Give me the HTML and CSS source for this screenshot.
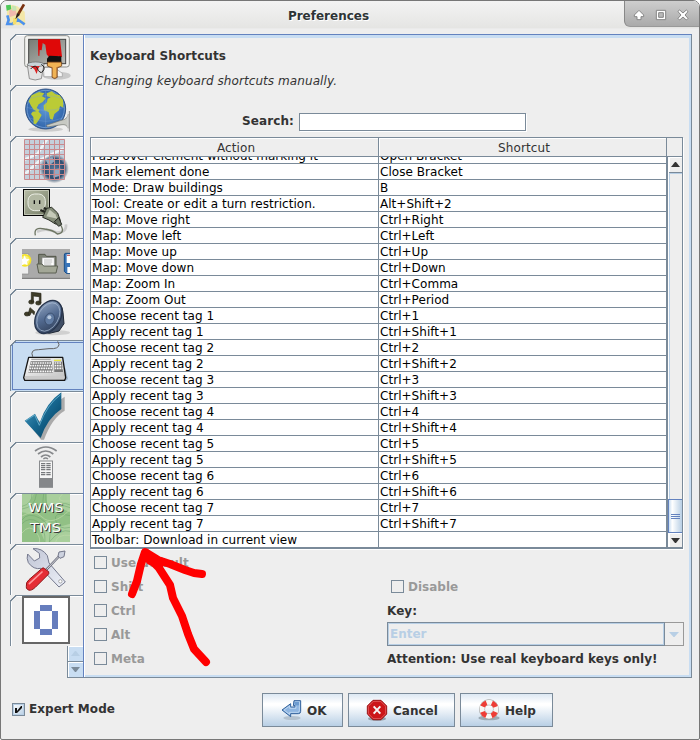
FILE: index.html
```html
<!DOCTYPE html>
<html lang="en">
<head>
<meta charset="utf-8">
<title>Preferences</title>
<link rel="stylesheet" href="styles.css">
</head>
<body>
<div class="window">
  <header class="titlebar">
    <svg class="app-icon" viewBox="15 9 66 72">
      <path fill="#f4e7a8" d="M20 18l18-3 14 4 22 16 2 38-24 3-30-4z"/>
      <path fill="#4fc95a" d="M18 16l14-2 2 14-14 4z"/>
      <path fill="#f1b9ad" d="M28 30l18-4 4 18-22 8z"/>
      <path fill="#c6e5b4" d="M36 17l12 2 2 12-13 2z"/>
      <path fill="none" stroke="#4c91ed" stroke-width="8" d="M22 46l4 14-4 12h16l14-14 12 8 10 7"/>
      <path fill="#f7df6a" d="M40 54l12 0-4 18-10 2z"/>
      <path stroke="#7a3210" stroke-width="8" d="M72 13L55 42"/>
      <path fill="#2d211b" d="M51 39l9 5-14 14z"/>
    </svg>
    <h1 class="title">Preferences</h1>
    <div class="controls">
      <svg viewBox="825 0 225 84">
        <g fill="#fff" stroke="#858585" stroke-width="3" stroke-linejoin="round">
          <path d="M870 31l14 14v5h-8v9h-12v-9h-8v-5z"/>
          <path fill-rule="evenodd" d="M922 31h28v28h-28zM929 38v14h14v-14z"/>
          <path d="M987 34l5-4 10 9 10-9 5 5-9 10 9 10-5 5-10-9-10 9-5-5 9-10-9-10z"/>
        </g>
      </svg>
    </div>
  </header>

  <main class="main">
    <nav class="tabs">
      <div class="tab"><svg viewBox="33 15 216 150">
        <defs><linearGradient id="scr" x2="1" y2="1"><stop stop-color="#777b75"/><stop offset="1" stop-color="#b9bbb6"/></linearGradient></defs>
        <ellipse cx="170" cy="137" rx="42" ry="12" fill="#c9c9c9"/>
        <path fill="#f5f5f5" stroke="#999" stroke-width="2" d="M130 112h32l25 18v10h-55z"/>
        <rect x="74" y="17" width="134" height="94" rx="8" fill="#f2f2ef" stroke="#8c8e8a" stroke-width="3"/>
        <rect x="86" y="28" width="111" height="73" fill="url(#scr)" stroke="#444" stroke-width="3"/>
        <path fill="#df0808" d="M114 28h66l6 52-7 3-4-6-5 6-6-5-5 6-6-6-6 4-7-9-4-29-8-5-3 22-6-1-1 18-3-1-1-32z"/>
        <path fill="#111" d="M141 86l7-9 36 2v17h-43z"/>
        <path fill="#b2713a" stroke="#704217" stroke-width="2" d="M142 96h43v12l-13 6v28q-8 8-16 0v-28l-14-6z"/>
        <path fill="#f0b354" d="M144 98h39v9l-14 5v29q-5 5-11 0v-29l-14-5z"/>
        <path fill="#e2e2e2" stroke="#666" stroke-width="2" d="M82 104l6 42q17 8 36 0l8-42z"/>
        <ellipse cx="107" cy="103" rx="25" ry="7" fill="#c9d4d8" stroke="#666" stroke-width="2"/>
        <path fill="#db2424" d="M91 108h28l-5 10-4 14-7-14z"/>
        <path fill="none" stroke="#222" stroke-width="3" d="M92 117q11-13 18-6 10 25 19 12 9-10-5-20"/>
      </svg></div>
      <div class="tab"><svg viewBox="33 168 216 150">
        <defs><radialGradient id="sea"><stop stop-color="#5c98d5"/><stop offset="1" stop-color="#3164aa"/></radialGradient></defs>
        <ellipse cx="137" cy="298" rx="52" ry="7" fill="#ccc"/>
        <circle cx="137" cy="237" r="60" fill="url(#sea)" stroke="#315485" stroke-width="3"/>
        <circle cx="137" cy="237" r="56" fill="none" stroke="#86afe0" stroke-width="2"/>
        <path fill="#bbcb36" d="M86 214l9-18 22-10 16 4-7 9 11 6-9 11-12 7-6 11 9 6-5 6-13-7-8-12zM98 245l16-2 11 12-8 14-9 13-7-1-1-20-7-9zM140 190l15-6 12 9 12 3 10 14 1 23-10-5-3 13-14 11-5 17-8-3-4-20-14-5-1-15 10-9 2-11 9-4-11-3z"/>
        <path fill="none" stroke="#7da5d8" stroke-width="2" opacity=".5" d="M80 232q57 18 114 0M88 264q50 20 100 0M88 206q50-18 100 0M137 180v114"/>
        <path fill="#c7c9c3" stroke="#70736c" stroke-width="2" d="M139 286l38-13 17-5q9-4 11-16v43q-6-13-19-11l-44 7z"/>
        <path stroke="#888" stroke-width="3" d="M208 243v62"/>
        <path stroke="#ddd" stroke-width="3" d="M204 245v58"/>
      </svg></div>
      <div class="tab"><svg viewBox="33 321 216 150">
        <defs><radialGradient id="orb"><stop stop-color="#55779b"/><stop offset=".7" stop-color="#304e70"/><stop offset="1" stop-color="#56657a" stop-opacity=".1"/></radialGradient></defs>
        <rect x="73" y="328" width="122" height="121" fill="#c4d0dc"/>
        <path fill="none" stroke="#eef4f7" stroke-width="8" d="M73 389l40-18 28-43M76 431l46-42 69-34"/>
        <circle cx="163" cy="416" r="43" fill="url(#orb)"/>
        <path fill="#91aac3" d="M137 389l20-8 6 13-17 14zM161 418l20-3-3 23-18 5z"/>
        <path fill="none" stroke="#c98a8e" stroke-width="3" d="M73.500 328.500h120v120h-120zM88.500 328v120M103.500 328v120M118.500 328v120M133.500 328v120M148.500 328v120M163.500 328v120M178.500 328v120M74 343.500h120M74 358.500h120M74 373.500h120M74 388.500h120M74 403.500h120M74 418.500h120M74 433.500h120"/>
      </svg></div>
      <div class="tab"><svg viewBox="33 9 216 150">
        <defs><linearGradient id="sock" x2="1" y2="1"><stop stop-color="#b9bea7"/><stop offset="1" stop-color="#737b65"/></linearGradient></defs>
        <rect x="70.500" y="13.500" width="78" height="78" fill="url(#sock)" stroke="#050505" stroke-width="3"/>
        <rect x="74" y="17" width="71" height="71" fill="none" stroke="#d7dacb" stroke-width="2"/>
        <rect x="84" y="27" width="52" height="50" rx="20" fill="#b2b8a3" stroke="#ebeee4" stroke-width="3"/>
        <path stroke="#111" stroke-width="4" d="M103 46v11M119 46v11"/>
        <path stroke="#24261f" stroke-width="7" d="M121 75l17 7M131 69l18 7"/>
        <path fill="none" stroke="#ccc" stroke-width="8" d="M111 140q32-13 59 3 31-1 28-25"/>
        <path fill="none" stroke="#6d7562" stroke-width="4" d="M106 151q-6-27 28-19 25 3 38 15 26-3 8-30"/>
        <path fill="#858d79" stroke="#292d24" stroke-width="3" d="M128 97l12-27 15-3 18 17 8 22-3 10-12 1-19-12z"/>
        <path fill="#c5cab8" d="M139 94l10-20 17 14 6 13z"/>
        <path fill="#6b7263" stroke="#22261f" stroke-width="3" d="M163 110l13-12 9 20-9 6z"/>
      </svg></div>
      <div class="tab"><svg viewBox="33 162 216 150">
        <defs><clipPath id="strip"><path d="M66 192h144v90H66z"/></clipPath></defs>
        <g clip-path="url(#strip)">
        <rect x="66" y="192" width="144" height="90" fill="#aaa"/>
        <path stroke="#777" stroke-width="3" d="M66 280h144"/>
        <path fill="#eee" stroke="#888" stroke-width="2" d="M60 206h26v61H60z"/>
        <circle cx="75" cy="226" r="19" fill="#f4e229"/><circle cx="75" cy="226" r="14" fill="#f9f176"/>
        <path fill="#fff" d="M74 211l4 10 11 2-8 7 2 11-9-5-9 5 2-11-8-7 11-2z"/>
        <path fill="#7d8175" stroke="#525649" stroke-width="3" d="M116 208h19l4 6h29v44h-52z"/>
        <path fill="#fff" stroke="#888" stroke-width="2" d="M126 218h37v27h-37z"/>
        <path stroke="#999" stroke-width="2" d="M132 225h25M132 231h25M132 237h22"/>
        <path fill="#a3a797" stroke="#5b5f52" stroke-width="3" d="M111 237h15l5 6h42l-5 21h-52z"/>
        <path fill="#3974b8" stroke="#194d87" stroke-width="3" d="M214 205h-17q-4 0-4 5v49l6 6h15"/>
        <path fill="#fff" d="M200 208h11v26h-11zM202 246h9v18h-9z"/><path stroke="#bf4c4c" stroke-width="3" d="M201 211h9"/>
        </g>
      </svg></div>
      <div class="tab"><svg viewBox="33 315 216 150">
        <defs><linearGradient id="cone" x2="1" y2="1"><stop stop-color="#9eb0c9"/><stop offset=".5" stop-color="#526a90"/><stop offset="1" stop-color="#29364d"/></linearGradient></defs>
        <ellipse cx="158" cy="443" rx="52" ry="8" fill="#d0d0d0"/>
        <g fill="#3f3d28" stroke="#27261a" stroke-width="2">
          <ellipse cx="94" cy="351" rx="8" ry="6"/><ellipse cx="115" cy="354" rx="8" ry="6"/>
          <path d="M94 322l29 3v29h-5v-19l-18-2v18h-6z"/>
          <ellipse cx="81" cy="387" rx="8" ry="6"/><path d="M84 388l6-20 14 12-2 9-7-8-6 11z"/>
        </g>
        <path fill="#414f66" stroke="#1d2634" stroke-width="3" d="M155 348q32 2 34 34l3 34-15 22-29 7q-33-3-31-38z"/>
        <ellipse cx="145" cy="396" rx="36" ry="53" transform="rotate(30 145 396)" fill="url(#cone)" stroke="#27354d" stroke-width="4"/>
        <ellipse cx="145" cy="396" rx="30" ry="46" transform="rotate(30 145 396)" fill="none" stroke="#aabbd2" stroke-width="2"/>
        <ellipse cx="149" cy="402" rx="14" ry="18" transform="rotate(20 149 402)" fill="#607ba2" stroke="#354764" stroke-width="2"/>
        <circle cx="148" cy="397" r="6" fill="#b7c8dd"/>
      </svg></div>
      <div class="tab tab-selected"><svg viewBox="33 18 216 150">
        <defs><linearGradient id="keys" x2="1" y2="1"><stop stop-color="#fff"/><stop offset="1" stop-color="#bebebe"/></linearGradient></defs>
        <path fill="#8da2ba" opacity=".7" d="M75 133l122 4 7-5-8-32z"/>
        <path fill="none" stroke="#616161" stroke-width="3" d="M98 65q-9-22 18-21l31-3q30 2 30-13l-4-9"/>
        <path fill="url(#keys)" stroke="#151515" stroke-width="4" stroke-linejoin="round" d="M86 67h102l9 61-3 8H74l-3-8z"/>
        <path fill="#cacaca" d="M75 123h118v9H75z"/>
        <path fill="#777" d="M92 79h63l4 34H85zM162 80h24l3 31h-26z"/><path stroke="#aaa" stroke-width="4" d="M94 73h58"/>
        <path stroke="#f6f6f6" stroke-width="5" stroke-dasharray="5 2" d="M92 84h63M90 92h66M88 100h69M85 109h74M164 84h21M164 92h23M164 100h24"/>
        <path stroke="#eaea45" stroke-width="4" d="M162 76h21"/>
      </svg></div>
      <div class="tab"><svg viewBox="33 171 216 150">
        <defs><linearGradient id="tick" x2="1" y2="1"><stop stop-color="#55a6c9"/><stop offset=".5" stop-color="#176891"/><stop offset="1" stop-color="#003856"/></linearGradient></defs>
        <path fill="#999" opacity=".8" d="M84 264l24-14 19 15q22-54 67-80v42q-38 22-62 87h-9z"/>
        <path fill="url(#tick)" d="M74 257l31-21 14 27q20-60 65-91v50q-42 28-62 87z"/>
        <path fill="none" stroke="#80c5df" stroke-width="2" d="M78 257l26-17 14 31q24-64 64-92"/>
      </svg></div>
      <div class="tab"><svg viewBox="33 324 216 150">
        <g fill="none" stroke="#86888b" stroke-width="5"><path d="M105 348q33-24 65 0M114 357q23-18 46 0M123 366q14-12 28 0"/><path stroke-width="4" d="M130 372q7-6 14 0"/></g>
        <rect x="118.500" y="378" width="39" height="78" fill="#f6f6f6" stroke="#898b8e" stroke-width="3"/>
        <path fill="#85878a" d="M117 429h42v29h-42z"/>
        <path stroke="#77797c" stroke-width="4" stroke-dasharray="13 3" d="M123 386h31M123 392h31M123 398h31M123 404h31M123 413h31M123 419h31"/>
      </svg></div>
      <div class="tab"><svg viewBox="33 27 216 150">
        <rect x="66" y="27" width="144" height="144" fill="#91c085"/>
        <path fill="#a9cf9c" d="M66 27h35l-11 25 28 15-20 20-32-5zM139 27h71v55l-27-12-28 13-14-26zM112 119l29-12 35 19 34-10v55h-75z"/>
        <path fill="none" stroke="#689f68" stroke-width="2" opacity=".7" d="M66 64q30-7 30-37M66 72q39-5 43-45M131 27q-9 49 18 49 25-24 61-8M138 27q-3 42 14 41 31-22 58-8M66 105q18-26 55-5t27 71M66 116q21-22 49-5 22 22 20 60M210 92q-52-14-43 15t43 20M210 139q-28-10-62 32"/>
        <path fill="none" stroke="#bed9a9" stroke-width="2" d="M66 93q36-22 60 3 31 30 84-22M66 144q22-29 43-2 13 18 9 29M210 151q-38-4-43 20M187 27q-26 25 23 21"/>
        <g class="map-label"><text class="map-shadow" x="88" y="85" textLength="105" lengthAdjust="spacingAndGlyphs">WMS</text><text class="map-shadow" x="93" y="145" textLength="93" lengthAdjust="spacingAndGlyphs">TMS</text><text x="85" y="82" textLength="105" lengthAdjust="spacingAndGlyphs">WMS</text><text x="90" y="142" textLength="93" lengthAdjust="spacingAndGlyphs">TMS</text></g>
      </svg></div>
      <div class="tab"><svg viewBox="33 180 216 150">
        <defs><linearGradient id="steel" x2="1" y2="1"><stop stop-color="#bfc4d4"/><stop offset="1" stop-color="#edf0f8"/></linearGradient></defs>
        <path fill="url(#steel)" stroke="#75798e" stroke-width="3" stroke-linejoin="round" d="M99 191q27-3 43 21l5 22 49 57-19 15-54-56q-22 5-38-17-6-13-2-26l20 21 16-9-1-14z"/>
        <circle cx="181" cy="289" r="5" fill="#fff" stroke="#888" stroke-width="2"/>
        <path stroke="#646779" stroke-width="7" d="M138 255l43-45"/><path stroke="#ddd" stroke-width="3" d="M138 255l43-45"/>
        <path fill="#cdd2df" stroke="#73778a" stroke-width="3" d="M174 213l3-12 18-3-3 17-12 5z"/>
        <path fill="#e52d35" stroke="#8f1517" stroke-width="3" d="M79 304q-2-12 8-20l38-33q4-5 9 0l12 9q2 7-3 10l-37 37q-15 14-24 6-4-3-3-9z"/>
        <path fill="none" stroke="#ff969b" stroke-width="5" stroke-linecap="round" d="M88 296l38-35"/>
      </svg></div>
      <div class="tab"><svg viewBox="33 333 216 150">
        <rect x="69" y="336" width="138" height="138" fill="#fff" stroke="#666" stroke-width="6"/>
        <path fill="#667dbd" d="M120 360h36v18h-36zM102 378h18v54h-18zM156 378h18v54h-18zM120 432h36v18h-36z"/>
      </svg></div>
      <div class="tab-scroll">
        <span class="tab-arrow"><svg viewBox="0 0 9 5"><path fill="#b8cfe5" d="M4 0h1l4 5H0z"/></svg></span>
        <span class="tab-arrow"><svg viewBox="0 0 9 5"><path fill="#7a8a99" d="M0 0h9L5 5H4z"/></svg></span>
      </div>
    </nav>

    <section class="panel">
      <h2 class="heading">Keyboard Shortcuts</h2>
      <p class="subtitle">Changing keyboard shortcuts manually.</p>
      <label class="search"><span class="search-label">Search:</span><input class="search-field" type="text"></label>

      <div class="scrollpane">
        <div class="thead"><span class="th">Action</span><span class="th">Shortcut</span></div>
        <div class="viewport">
          <div class="rows">
            <div class="row"><span>Pass over element without marking it</span><span>Open Bracket</span></div>
            <div class="row"><span>Mark element done</span><span>Close Bracket</span></div>
            <div class="row"><span>Mode: Draw buildings</span><span>B</span></div>
            <div class="row"><span>Tool: Create or edit a turn restriction.</span><span>Alt+Shift+2</span></div>
            <div class="row"><span>Map: Move right</span><span>Ctrl+Right</span></div>
            <div class="row"><span>Map: Move left</span><span>Ctrl+Left</span></div>
            <div class="row"><span>Map: Move up</span><span>Ctrl+Up</span></div>
            <div class="row"><span>Map: Move down</span><span>Ctrl+Down</span></div>
            <div class="row"><span>Map: Zoom In</span><span>Ctrl+Comma</span></div>
            <div class="row"><span>Map: Zoom Out</span><span>Ctrl+Period</span></div>
            <div class="row"><span>Choose recent tag 1</span><span>Ctrl+1</span></div>
            <div class="row"><span>Apply recent tag 1</span><span>Ctrl+Shift+1</span></div>
            <div class="row"><span>Choose recent tag 2</span><span>Ctrl+2</span></div>
            <div class="row"><span>Apply recent tag 2</span><span>Ctrl+Shift+2</span></div>
            <div class="row"><span>Choose recent tag 3</span><span>Ctrl+3</span></div>
            <div class="row"><span>Apply recent tag 3</span><span>Ctrl+Shift+3</span></div>
            <div class="row"><span>Choose recent tag 4</span><span>Ctrl+4</span></div>
            <div class="row"><span>Apply recent tag 4</span><span>Ctrl+Shift+4</span></div>
            <div class="row"><span>Choose recent tag 5</span><span>Ctrl+5</span></div>
            <div class="row"><span>Apply recent tag 5</span><span>Ctrl+Shift+5</span></div>
            <div class="row"><span>Choose recent tag 6</span><span>Ctrl+6</span></div>
            <div class="row"><span>Apply recent tag 6</span><span>Ctrl+Shift+6</span></div>
            <div class="row"><span>Choose recent tag 7</span><span>Ctrl+7</span></div>
            <div class="row"><span>Apply recent tag 7</span><span>Ctrl+Shift+7</span></div>
            <div class="row"><span>Toolbar: Download in current view</span><span></span></div>
          </div>
          <div class="scrollbar">
            <span class="sb-button"><svg viewBox="0 0 9 5"><path fill="#333" d="M4 0h1l4 5H0z"/></svg></span>
            <span class="sb-track"></span>
            <span class="sb-thumb"><i></i><i></i><i></i></span>
            <span class="sb-button sb-down"><svg viewBox="0 0 9 5"><path fill="#333" d="M0 0h9L5 5H4z"/></svg></span>
          </div>
        </div>
      </div>

      <div class="form">
        <div class="modifiers">
          <span class="check"><i class="box"></i>Use default</span>
          <span class="check"><i class="box"></i>Shift</span>
          <span class="check"><i class="box"></i>Ctrl</span>
          <span class="check"><i class="box"></i>Alt</span>
          <span class="check"><i class="box"></i>Meta</span>
        </div>
        <div class="key-side">
          <span class="check"><i class="box"></i>Disable</span>
          <span class="key-label">Key:</span>
          <div class="combo"><span class="combo-value">Enter</span><span class="combo-button"><svg viewBox="0 0 10 5"><path fill="#b8cfe5" d="M0 0h10L5.5 5h-1z"/></svg></span></div>
          <span class="key-label">Attention: Use real keyboard keys only!</span>
        </div>
      </div>
    </section>
  </main>

  <footer class="footer">
    <span class="check expert"><i class="box box-on"><svg viewBox="0 0 13 13"><path fill="#111" d="M3 5h2v3l4-5h1v2L5 10H3z"/></svg></i>Expert Mode</span>
    <button class="button button-ok"><svg viewBox="840 87 66 66">
      <ellipse cx="876" cy="144" rx="26" ry="6" fill="#b4c2cf"/>
      <path fill="#8eb5e1" stroke="#31619b" stroke-width="3" stroke-linejoin="round" d="M882 92h20v32q0 7-7 7h-23v9l-26-20 26-19v10h13v-4h-5z"/>
      <path fill="none" stroke="#d3e5f7" stroke-width="2" d="M885 95h13v27q0 5-5 5h-24v6l-17-13 17-12v7h19v-8"/>
      <path fill="#6c9bd0" d="M885 95h12v11h-12z"/>
    </svg>OK</button>
    <button class="button button-cancel"><svg viewBox="78 87 66 66">
      <ellipse cx="111" cy="146" rx="27" ry="7" fill="#93a0aa"/>
      <path fill="#cc1619" stroke="#930c0e" stroke-width="3" d="M99 91h24l17 17v24l-17 17H99l-17-17v-24z"/>
      <path fill="none" stroke="#ec7777" stroke-width="2" d="M100 94h22l15 15v22l-15 15h-22l-15-15v-22z"/>
      <path stroke="#f5f5f5" stroke-width="6" d="M101 109l20 22M121 109l-20 22"/>
    </svg>Cancel</button>
    <button class="button button-help"><svg viewBox="414 87 66 66">
      <ellipse cx="447" cy="144" rx="32" ry="7" fill="#9caab5"/>
      <circle cx="447" cy="118" r="21" fill="none" stroke="#999" stroke-width="18"/>
      <circle cx="447" cy="118" r="21" fill="none" stroke="#f7f7f4" stroke-width="15"/>
      <circle cx="447" cy="118" r="21" fill="none" stroke="#ed3d36" stroke-width="15" stroke-dasharray="16.5 16.5" stroke-dashoffset="-8.25"/>
    </svg>Help</button>
  </footer>

  <svg class="arrow" viewBox="120 540 100 140">
    <g fill="none" stroke="#f00" stroke-width="8" stroke-linecap="round" stroke-linejoin="round">
      <path d="M132 594l5-13 4-17 4-12 13 8 12 4 15 6 9 3 8 1"/>
      <path d="M147 556l12 12 11 17 3 13 9 18 6 18 6 15 12 13"/>
      <path d="M146 553l4 8 10 3"/>
    </g>
  </svg>
</div>
</body>
</html>
```
FILE: styles.css
```css
* { box-sizing: border-box; }
html { background: #fff; }
body {
  margin: 0;
  font: 12px/14px "DejaVu Sans", sans-serif;
  color: #333;
  overflow: hidden;
}
h1, h2, p { margin: 0; }
svg { display: block; }

.window {
  position: relative;
  width: 700px;
  height: 740px;
  background: #eee;
  border: 1px solid #777;
  border-radius: 7px 7px 2px 2px;
  overflow: hidden;
}
.titlebar {
  display: flex;
  height: 28px;
  padding-left: 4px;
  background: linear-gradient(#f3f3f3, #e5e5e3);
  border-bottom: 1px solid #eaeaea;
}
.app-icon { width: 22px; height: 24px; margin-top: 2px; }
.title {
  flex: 1;
  padding: 8px 0 0 6px;
  font-size: 12px;
  line-height: 15px;
  text-align: center;
  color: #2e3436;
  text-shadow: 1px 1px #fff;
}
.controls {
  width: 75px;
  height: 26px;
  background: linear-gradient(#cecece, #aaa);
  border-left: 1px solid #888;
  border-bottom: 1px solid #999;
  border-radius: 0 0 0 6px;
}
.controls svg { width: 75px; height: 28px; margin: -1px 0 0 -1px; }

.main {
  display: flex;
  height: 644px;
  margin: 5px 7px 0 9px;
}
.tabs { width: 73px; }
.tab {
  width: 73px;
  height: 51px;
  padding: 1px 0 0 1px;
  background:
    linear-gradient(135deg, #eee 4px, #7a8a99 4px, #7a8a99 5px, transparent 5px) 0 0 / 7px 7px no-repeat,
    linear-gradient(#fff, #fff) 7px 1px / 66px 1px no-repeat,
    linear-gradient(#7a8a99, #7a8a99) 6px 0 / 67px 1px no-repeat,
    linear-gradient(#7a8a99, #7a8a99) 0 6px / 1px 45px no-repeat,
    linear-gradient(#fff, #fff) 1px 7px / 1px 44px no-repeat;
}
.tab svg { width: 72px; height: 50px; }
.tab-selected {
  background:
    linear-gradient(135deg, #eee 4px, #7a8a99 4px, #7a8a99 5px, transparent 5px) 0 0 / 7px 7px no-repeat,
    linear-gradient(#7a8a99, #7a8a99) 6px 0 / 67px 1px no-repeat,
    linear-gradient(#6382bf, #6382bf) 2px 2px / 71px 1px no-repeat,
    linear-gradient(#6382bf, #6382bf) 2px 49px / 71px 1px no-repeat,
    linear-gradient(#6382bf, #6382bf) 2px 2px / 1px 48px no-repeat,
    linear-gradient(#7a8a99, #7a8a99) 0 6px / 1px 45px no-repeat,
    #c8ddf2;
}
.tab-scroll { width: 16px; margin-left: 57px; }
.tab-arrow {
  display: grid;
  place-items: center;
  height: 16px;
  background: #c8ddf2;
  border: solid #7a8a99;
  border-width: 0 0 1px 1px;
  box-shadow: inset 1px 1px #fff;
}
.tab-arrow svg { width: 9px; height: 5px; }

.panel {
  width: 609px;
  padding: 14px 6px 0;
  border: 1px solid #7a8a99;
  border-top-color: #6382bf;
  border-left-color: #6382bf;
  box-shadow: inset 1px 0 #fff, inset 0 3px #c8ddf2, inset -2px -2px #c8ddf2;
}
.heading { font-size: 12px; line-height: 14px; letter-spacing: .1px; }
.subtitle { margin-top: 11px; padding-left: 5px; font-style: italic; letter-spacing: .08px; }
.search {
  display: flex;
  height: 18px;
  margin: 25px 0 0 152px;
  gap: 5px;
  font-weight: bold;
}
.search-label { width: 52px; line-height: 16px; letter-spacing: .1px; }
.search-field {
  width: 227px;
  height: 18px;
  padding: 0;
  background: #fff;
  border: 1px solid #7a8a99;
  box-shadow: 1px 1px #fff;
}

.scrollpane {
  width: 593px;
  height: 412px;
  margin-top: 6px;
  border: 1px solid #7a8a99;
  border-bottom-width: 2px;
  box-shadow: 1px 1px #fff;
}
.thead {
  display: grid;
  grid-template-columns: 288px 288px 15px;
  height: 19px;
  border-bottom: 1px solid #7a8a99;
}
.th {
  padding: 1px 0 0 3px;
  line-height: 19px;
  height: 18px;
  text-align: center;
  letter-spacing: .1px;
  border-right: 1px solid #7a8a99;
  box-shadow: inset 1px 1px #fff;
}
.viewport { display: flex; height: 390px; overflow: hidden; }
.rows { width: 577px; margin-top: -9px; background: #fff; border-right: 1px solid #7a8a99; }
.row {
  display: grid;
  grid-template-columns: 288px 288px;
  height: 16px;
  line-height: 14px;
  letter-spacing: .04px;
  color: #000;
}
.row span {
  height: 16px;
  padding: 1px 0 0 1px;
  white-space: pre;
  border: solid #7a8a99;
  border-width: 0 1px 1px 0;
}
.scrollbar {
  display: flex;
  flex-direction: column;
  width: 14px;
  border-left: 1px solid #fff;
}
.sb-button {
  display: grid;
  place-items: center;
  height: 16px;
  padding-right: 1px;
  border-bottom: 1px solid #7a8a99;
  box-shadow: inset 1px 1px #fff;
}
.sb-button svg { width: 9px; height: 5px; }
.sb-track { flex: 1; box-shadow: inset 1px 1px #b8cfe5; }
.sb-thumb {
  display: flex;
  flex-direction: column;
  align-items: center;
  justify-content: center;
  gap: 1px;
  height: 34px;
  margin-left: -1px;
  background: linear-gradient(90deg, #c8ddf2, #fff 25%, #b8cfe5);
  border: 1px solid #6382bf;
  border-right: 0;
}
.sb-thumb i { width: 9px; height: 1px; background: #6382bf; }
.sb-down { height: 14px; border-bottom: 0; }

.form { display: flex; padding: 2px 0 0 4px; font-weight: bold; }
.modifiers { width: 293px; }
.check {
  display: flex;
  align-items: center;
  height: 24px;
  gap: 4px;
  line-height: 13px;
  color: #999;
}
.box { width: 13px; height: 13px; border: 1px solid #7a8a99; }
.modifiers .box, .key-side .box { margin-top: -1px; }
.key-side { width: 297px; padding-top: 24px; }
.key-side .check { padding-left: 4px; }
.key-label { display: block; height: 24px; line-height: 24px; white-space: nowrap; letter-spacing: .04px; }
.combo { display: flex; width: 297px; height: 24px; margin-top: -1px; margin-bottom: 1px; }
.combo-value {
  width: 278px;
  padding-left: 2px;
  line-height: 23px;
  color: #b8cfe5;
  border: 1px solid #7a8a99;
  box-shadow: inset 0 0 0 1px #b8cfe5;
}
.combo-button {
  display: grid;
  flex: 1;
  place-items: center;
  border: 1px solid #999;
  border-left: 0;
}
.combo-button svg { width: 10px; height: 5px; }

.footer { display: flex; padding: 15px 0 0 11px; gap: 5px; }
.expert { width: 245px; margin-top: 4px; line-height: 15px; color: #333; font-weight: bold; letter-spacing: .05px; }
.box-on { background: linear-gradient(135deg, #fff, #b8cfe5); box-shadow: inset 0 0 0 1px #b8cfe5; }
.box-on svg { width: 13px; height: 13px; margin: -1px; }
.button {
  display: flex;
  align-items: center;
  height: 34px;
  padding: 1px 0 0 17px;
  gap: 5px;
  font: bold 12px/14px "DejaVu Sans", sans-serif;
  color: #333;
  background: linear-gradient(#dde8f3, #fff 30%, #fff 35%, #b8cfe5);
  border: 1px solid #7a8a99;
}
.button-ok { width: 81px; }
.button-cancel { width: 107px; }
.button-help { width: 93px; }
.button svg { width: 22px; height: 22px; margin-top: -2px; }
.map-label { font: 38px "DejaVu Sans", sans-serif; fill: #fff; }
.map-shadow { fill: #333; }

/* Hand-drawn annotation over the dialog */
.arrow {
  position: absolute;
  left: 119px;
  top: 539px;
  width: 100px;
  height: 140px;
}
```
